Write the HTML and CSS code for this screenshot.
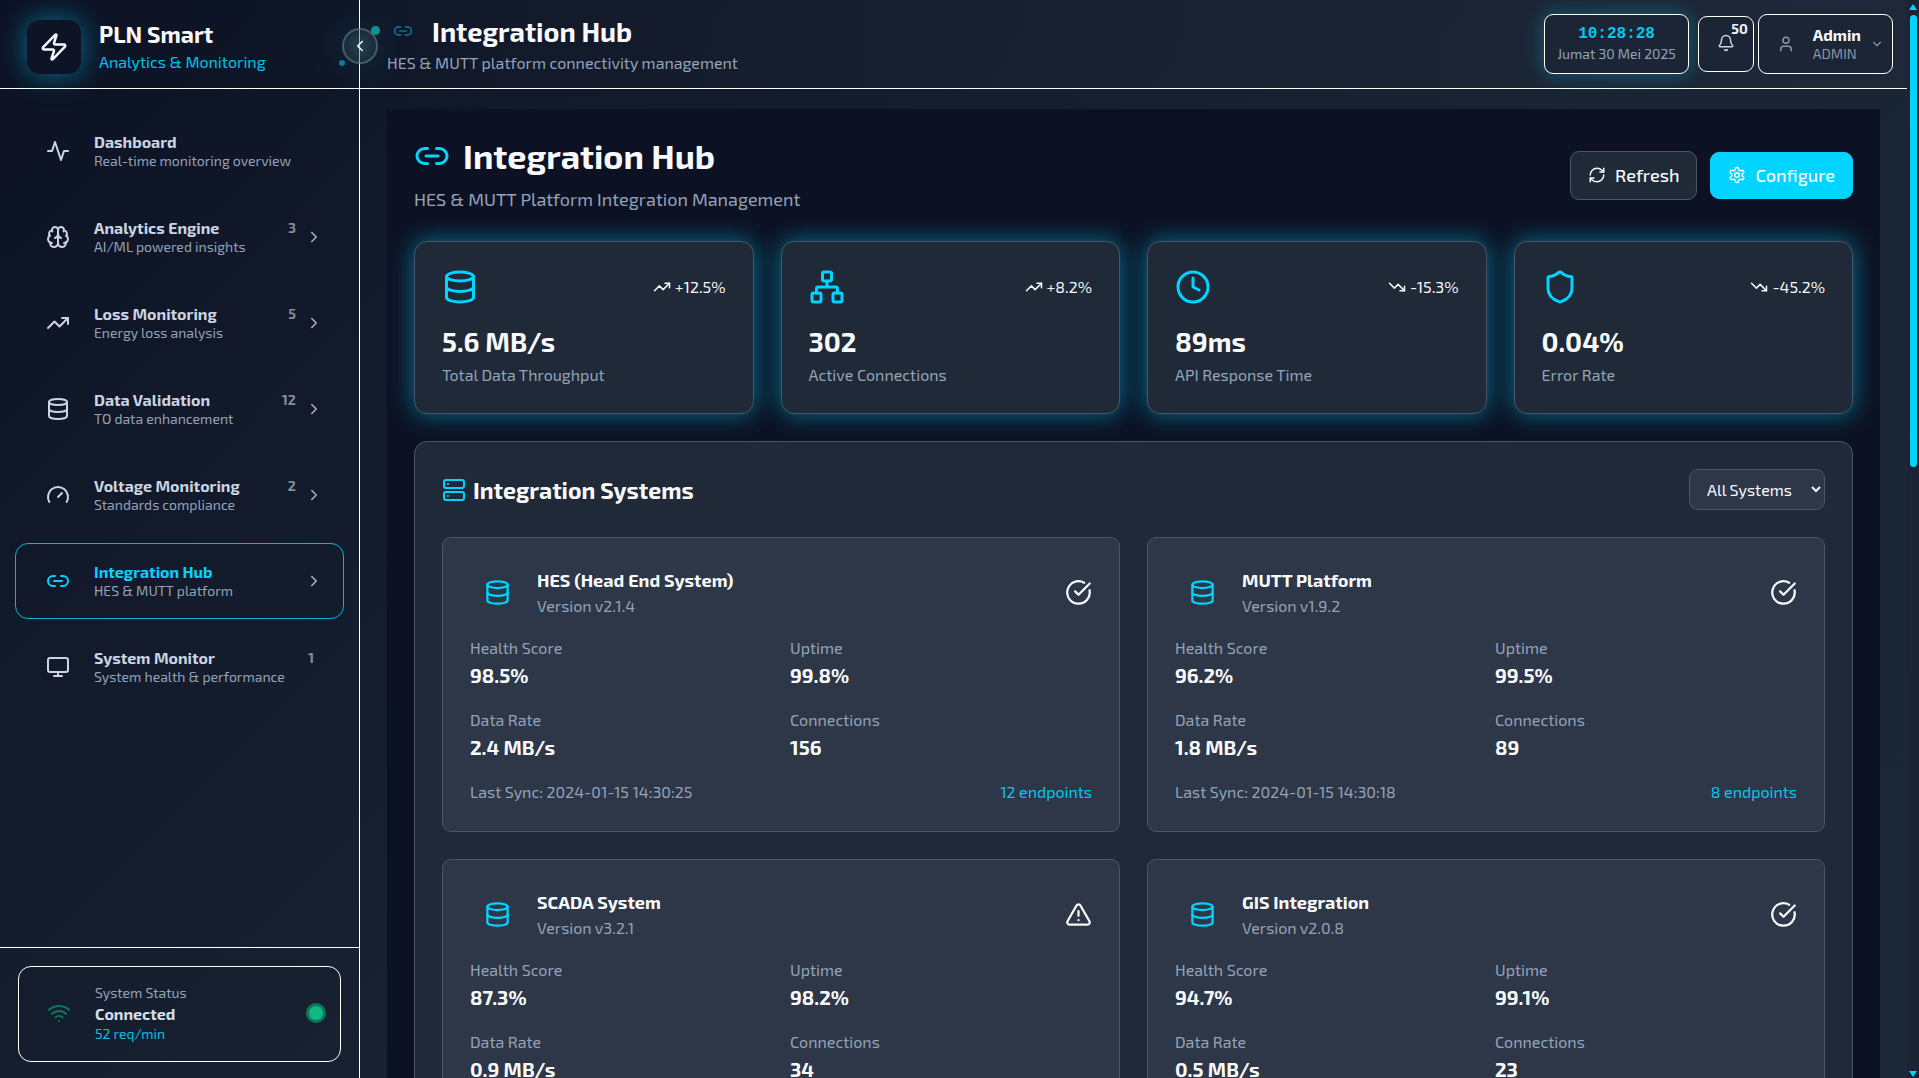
FILE: index.html
```html
<!DOCTYPE html>
<html lang="en">
<head>
<meta charset="utf-8">
<meta name="viewport" content="width=device-width, initial-scale=1">
<title>PLN Smart - Integration Hub</title>
<link rel="stylesheet" href="styles.css">
</head>
<body>
<svg class="sprite" aria-hidden="true">
  <symbol id="i-zap" viewBox="0 0 24 24"><path d="M4 14a1 1 0 0 1-.78-1.63l9.9-10.2a.5.5 0 0 1 .86.46l-1.92 6.02A1 1 0 0 0 13 10h7a1 1 0 0 1 .78 1.63l-9.9 10.2a.5.5 0 0 1-.86-.46l1.92-6.02A1 1 0 0 0 11 14z"/></symbol>
  <symbol id="i-activity" viewBox="0 0 24 24"><path d="M22 12h-4l-3 9L9 3l-3 9H2"/></symbol>
  <symbol id="i-brain" viewBox="0 0 24 24"><path d="M12 5a3 3 0 1 0-5.997.125 4 4 0 0 0-2.526 5.77 4 4 0 0 0 .556 6.588A4 4 0 1 0 12 18Z"/><path d="M12 5a3 3 0 1 1 5.997.125 4 4 0 0 1 2.526 5.77 4 4 0 0 1-.556 6.588A4 4 0 1 1 12 18Z"/><path d="M15 13a4.5 4.5 0 0 1-3-4 4.5 4.5 0 0 1-3 4"/><path d="M17.599 6.5a3 3 0 0 0 .399-1.375M6.003 5.125A3 3 0 0 0 6.401 6.5M3.477 10.896a4 4 0 0 1 .585-.396M19.938 10.5a4 4 0 0 1 .585.396M6 18a4 4 0 0 1-1.967-.516M19.967 17.484A4 4 0 0 1 18 18"/></symbol>
  <symbol id="i-up" viewBox="0 0 24 24"><path d="M22 7 13.5 15.5 8.5 10.5 2 17"/><path d="M16 7h6v6"/></symbol>
  <symbol id="i-down" viewBox="0 0 24 24"><path d="M22 17 13.5 8.5 8.5 13.5 2 7"/><path d="M16 17h6v-6"/></symbol>
  <symbol id="i-db" viewBox="0 0 24 24"><ellipse cx="12" cy="5" rx="9" ry="3"/><path d="M3 5v14a9 3 0 0 0 18 0V5"/><path d="M3 12a9 3 0 0 0 18 0"/></symbol>
  <symbol id="i-gauge" viewBox="0 0 24 24"><path d="m12 14 4-4"/><path d="M3.34 19a10 10 0 1 1 17.32 0"/></symbol>
  <symbol id="i-link" viewBox="0 0 24 24"><path d="M9 17H7A5 5 0 0 1 7 7h2"/><path d="M15 7h2a5 5 0 1 1 0 10h-2"/><path d="M8 12h8"/></symbol>
  <symbol id="i-monitor" viewBox="0 0 24 24"><rect x="2" y="3" width="20" height="14" rx="2"/><path d="M8 21h8M12 17v4"/></symbol>
  <symbol id="i-right" viewBox="0 0 24 24"><path d="m9 18 6-6-6-6"/></symbol>
  <symbol id="i-left" viewBox="0 0 24 24"><path d="m15 18-6-6 6-6"/></symbol>
  <symbol id="i-chev" viewBox="0 0 24 24"><path d="m6 9 6 6 6-6"/></symbol>
  <symbol id="i-wifi" viewBox="0 0 24 24"><path d="M12 20h.01M2 8.82a15 15 0 0 1 20 0M5 12.859a10 10 0 0 1 14 0M8.5 16.429a5 5 0 0 1 7 0"/></symbol>
  <symbol id="i-bell" viewBox="0 0 24 24"><path d="M10.268 21a2 2 0 0 0 3.464 0"/><path d="M3.262 15.326A1 1 0 0 0 4 17h16a1 1 0 0 0 .74-1.673C19.41 13.956 18 12.499 18 8A6 6 0 0 0 6 8c0 4.499-1.411 5.956-2.738 7.326"/></symbol>
  <symbol id="i-user" viewBox="0 0 24 24"><path d="M19 21v-2a4 4 0 0 0-4-4H9a4 4 0 0 0-4 4v2"/><circle cx="12" cy="7" r="4"/></symbol>
  <symbol id="i-refresh" viewBox="0 0 24 24"><path d="M3 12a9 9 0 0 1 9-9 9.75 9.75 0 0 1 6.74 2.74L21 8"/><path d="M21 3v5h-5"/><path d="M21 12a9 9 0 0 1-9 9 9.75 9.75 0 0 1-6.74-2.74L3 16"/><path d="M8 16H3v5"/></symbol>
  <symbol id="i-gear" viewBox="0 0 24 24"><path d="M12.22 2h-.44a2 2 0 0 0-2 2v.18a2 2 0 0 1-1 1.73l-.43.25a2 2 0 0 1-2 0l-.15-.08a2 2 0 0 0-2.73.73l-.22.38a2 2 0 0 0 .73 2.73l.15.1a2 2 0 0 1 1 1.72v.51a2 2 0 0 1-1 1.74l-.15.09a2 2 0 0 0-.73 2.73l.22.38a2 2 0 0 0 2.73.73l.15-.08a2 2 0 0 1 2 0l.43.25a2 2 0 0 1 1 1.73V20a2 2 0 0 0 2 2h.44a2 2 0 0 0 2-2v-.18a2 2 0 0 1 1-1.73l.43-.25a2 2 0 0 1 2 0l.15.08a2 2 0 0 0 2.73-.73l.22-.39a2 2 0 0 0-.73-2.73l-.15-.08a2 2 0 0 1-1-1.74v-.5a2 2 0 0 1 1-1.74l.15-.09a2 2 0 0 0 .73-2.73l-.22-.38a2 2 0 0 0-2.73-.73l-.15.08a2 2 0 0 1-2 0l-.43-.25a2 2 0 0 1-1-1.73V4a2 2 0 0 0-2-2z"/><circle cx="12" cy="12" r="3"/></symbol>
  <symbol id="i-network" viewBox="0 0 24 24"><rect x="16" y="16" width="6" height="6" rx="1"/><rect x="2" y="16" width="6" height="6" rx="1"/><rect x="9" y="2" width="6" height="6" rx="1"/><path d="M5 16v-3a1 1 0 0 1 1-1h12a1 1 0 0 1 1 1v3M12 12V8"/></symbol>
  <symbol id="i-clock" viewBox="0 0 24 24"><circle cx="12" cy="12" r="10"/><path d="M12 6v6l4 2"/></symbol>
  <symbol id="i-shield" viewBox="0 0 24 24"><path d="M20 13c0 5-3.5 7.5-7.66 8.95a1 1 0 0 1-.67-.01C7.5 20.5 4 18 4 13V6a1 1 0 0 1 1-1c2 0 4.5-1.2 6.24-2.72a1.17 1.17 0 0 1 1.52 0C14.51 3.81 17 5 19 5a1 1 0 0 1 1 1z"/></symbol>
  <symbol id="i-server" viewBox="0 0 24 24"><rect x="2" y="2" width="20" height="8" rx="2"/><rect x="2" y="14" width="20" height="8" rx="2"/><path d="M6 6h.01M6 18h.01"/></symbol>
  <symbol id="i-check" viewBox="0 0 24 24"><path d="M21.801 10A10 10 0 1 1 17 3.335"/><path d="m9 11 3 3L22 4"/></symbol>
  <symbol id="i-warn" viewBox="0 0 24 24"><path d="m21.73 18-8-14a2 2 0 0 0-3.48 0l-8 14A2 2 0 0 0 4 21h16a2 2 0 0 0 1.73-3"/><path d="M12 9v4M12 17h.01"/></symbol>
</svg>

<div class="app">
  <aside class="sidebar">
    <div class="brand">
      <span class="logo"><svg class="icon s30"><use href="#i-zap"/></svg></span>
      <div>
        <p class="brand-name">PLN Smart</p>
        <p class="brand-sub">Analytics &amp; Monitoring</p>
      </div>
      <i class="particle small"></i>
      <i class="particle large"></i>
      <button class="collapse" aria-label="Collapse sidebar"><svg class="icon s18"><use href="#i-left"/></svg></button>
    </div>

    <nav class="nav">
      <a class="nav-item" href="#dashboard"><svg class="icon s24"><use href="#i-activity"/></svg><span class="nav-text"><b>Dashboard</b><small>Real-time monitoring overview</small></span></a>
      <a class="nav-item" href="#analytics"><svg class="icon s24"><use href="#i-brain"/></svg><span class="nav-text"><b>Analytics Engine</b><small>AI/ML powered insights</small></span><span class="badge">3</span><svg class="icon s18 chev"><use href="#i-right"/></svg></a>
      <a class="nav-item" href="#loss"><svg class="icon s24"><use href="#i-up"/></svg><span class="nav-text"><b>Loss Monitoring</b><small>Energy loss analysis</small></span><span class="badge">5</span><svg class="icon s18 chev"><use href="#i-right"/></svg></a>
      <a class="nav-item" href="#validation"><svg class="icon s24"><use href="#i-db"/></svg><span class="nav-text"><b>Data Validation</b><small>TO data enhancement</small></span><span class="badge">12</span><svg class="icon s18 chev"><use href="#i-right"/></svg></a>
      <a class="nav-item" href="#voltage"><svg class="icon s24"><use href="#i-gauge"/></svg><span class="nav-text"><b>Voltage Monitoring</b><small>Standards compliance</small></span><span class="badge">2</span><svg class="icon s18 chev"><use href="#i-right"/></svg></a>
      <a class="nav-item active" href="#integration" aria-current="page"><svg class="icon s24"><use href="#i-link"/></svg><span class="nav-text"><b>Integration Hub</b><small>HES &amp; MUTT platform</small></span><svg class="icon s18 chev"><use href="#i-right"/></svg></a>
      <a class="nav-item" href="#system"><svg class="icon s24"><use href="#i-monitor"/></svg><span class="nav-text"><b>System Monitor</b><small>System health &amp; performance</small></span><span class="badge">1</span></a>
    </nav>

    <div class="side-foot">
      <div class="status">
        <svg class="icon s24 wifi"><use href="#i-wifi"/></svg>
        <div class="status-text">
          <p class="status-label">System Status</p>
          <p class="status-value">Connected</p>
          <p class="status-rate">52 req/min</p>
        </div>
        <i class="status-dot"></i>
      </div>
    </div>
  </aside>

  <div class="main">
    <header class="topbar">
      <div>
        <div class="top-title"><svg class="icon s20"><use href="#i-link"/></svg><h2>Integration Hub</h2></div>
        <p class="top-sub">HES &amp; MUTT platform connectivity management</p>
      </div>
      <div class="top-tools">
        <div class="clock"><time class="clock-time">10:28:28</time><span class="clock-date">Jumat 30 Mei 2025</span></div>
        <button class="bell" aria-label="Notifications"><svg class="icon s18"><use href="#i-bell"/></svg><span class="bell-count">50</span></button>
        <button class="user"><svg class="icon s18"><use href="#i-user"/></svg><span class="user-text"><b>Admin</b><span>ADMIN</span></span><svg class="icon s14"><use href="#i-chev"/></svg></button>
      </div>
    </header>

    <main class="content">
      <div class="panel">
        <div class="page-head">
          <div>
            <div class="page-title"><svg class="icon s36"><use href="#i-link"/></svg><h1>Integration Hub</h1></div>
            <p class="page-sub">HES &amp; MUTT Platform Integration Management</p>
          </div>
          <div class="actions">
            <button class="btn"><svg class="icon s18"><use href="#i-refresh"/></svg>Refresh</button>
            <button class="btn primary"><svg class="icon s18"><use href="#i-gear"/></svg>Configure</button>
          </div>
        </div>

        <div class="stats">
          <section class="stat"><div class="stat-top"><svg class="icon s36"><use href="#i-db"/></svg><span class="trend"><svg class="icon s18"><use href="#i-up"/></svg>+12.5%</span></div><p class="stat-value">5.6 MB/s</p><p class="stat-label">Total Data Throughput</p></section>
          <section class="stat"><div class="stat-top"><svg class="icon s36"><use href="#i-network"/></svg><span class="trend"><svg class="icon s18"><use href="#i-up"/></svg>+8.2%</span></div><p class="stat-value">302</p><p class="stat-label">Active Connections</p></section>
          <section class="stat"><div class="stat-top"><svg class="icon s36"><use href="#i-clock"/></svg><span class="trend"><svg class="icon s18"><use href="#i-down"/></svg>-15.3%</span></div><p class="stat-value">89ms</p><p class="stat-label">API Response Time</p></section>
          <section class="stat"><div class="stat-top"><svg class="icon s36"><use href="#i-shield"/></svg><span class="trend"><svg class="icon s18"><use href="#i-down"/></svg>-45.2%</span></div><p class="stat-value">0.04%</p><p class="stat-label">Error Rate</p></section>
        </div>

        <section class="systems">
          <div class="systems-head">
            <div class="systems-title"><svg class="icon s24"><use href="#i-server"/></svg><h2>Integration Systems</h2></div>
            <select class="filter" aria-label="Filter systems"><option>All Systems</option><option>Connected</option><option>Warning</option></select>
          </div>
          <div class="system-grid">
            <article class="system">
              <div class="system-head"><span class="system-icon"><svg class="icon s27"><use href="#i-db"/></svg></span><div class="system-name"><h3>HES (Head End System)</h3><p>Version v2.1.4</p></div><svg class="icon s27"><use href="#i-check"/></svg></div>
              <dl class="metrics"><div><dt>Health Score</dt><dd>98.5%</dd></div><div><dt>Uptime</dt><dd>99.8%</dd></div><div><dt>Data Rate</dt><dd>2.4 MB/s</dd></div><div><dt>Connections</dt><dd>156</dd></div></dl>
              <div class="system-foot"><span>Last Sync: 2024-01-15 14:30:25</span><span class="endpoints">12 endpoints</span></div>
            </article>
            <article class="system">
              <div class="system-head"><span class="system-icon"><svg class="icon s27"><use href="#i-db"/></svg></span><div class="system-name"><h3>MUTT Platform</h3><p>Version v1.9.2</p></div><svg class="icon s27"><use href="#i-check"/></svg></div>
              <dl class="metrics"><div><dt>Health Score</dt><dd>96.2%</dd></div><div><dt>Uptime</dt><dd>99.5%</dd></div><div><dt>Data Rate</dt><dd>1.8 MB/s</dd></div><div><dt>Connections</dt><dd>89</dd></div></dl>
              <div class="system-foot"><span>Last Sync: 2024-01-15 14:30:18</span><span class="endpoints">8 endpoints</span></div>
            </article>
            <article class="system">
              <div class="system-head"><span class="system-icon"><svg class="icon s27"><use href="#i-db"/></svg></span><div class="system-name"><h3>SCADA System</h3><p>Version v3.2.1</p></div><svg class="icon s27"><use href="#i-warn"/></svg></div>
              <dl class="metrics"><div><dt>Health Score</dt><dd>87.3%</dd></div><div><dt>Uptime</dt><dd>98.2%</dd></div><div><dt>Data Rate</dt><dd>0.9 MB/s</dd></div><div><dt>Connections</dt><dd>34</dd></div></dl>
            </article>
            <article class="system">
              <div class="system-head"><span class="system-icon"><svg class="icon s27"><use href="#i-db"/></svg></span><div class="system-name"><h3>GIS Integration</h3><p>Version v2.0.8</p></div><svg class="icon s27"><use href="#i-check"/></svg></div>
              <dl class="metrics"><div><dt>Health Score</dt><dd>94.7%</dd></div><div><dt>Uptime</dt><dd>99.1%</dd></div><div><dt>Data Rate</dt><dd>0.5 MB/s</dd></div><div><dt>Connections</dt><dd>23</dd></div></dl>
            </article>
          </div>
        </section>
      </div>
    </main>
  </div>

  <div class="scrollbar" aria-hidden="true"><i class="arrow-up"></i><div class="track"><i class="thumb"></i></div><i class="arrow-down"></i></div>
</div>
</body>
</html>
```
FILE: styles.css
```css
:root {
  --cyan: #00d4ff;
  --text: #f8fafc;
  --soft: #cbd5e1;
  --muted: #94a3b8;
  --card: #1f2937;
  --raised: #2d3748;
  --line: #4a5568;
}

* { box-sizing: border-box; }

body, h1, h2, h3, p, dl, dd { margin: 0; }

body {
  height: 100vh;
  overflow: hidden;
  background: linear-gradient(135deg, #0c1224 0%, #121a2b 25%, #1a2534 60%, #1c2838 100%);
  color: var(--text);
  font-family: "Exo 2", Roboto, "Noto Sans", sans-serif;
  font-size: 16px;
  line-height: 24px;
}

button, select { font: inherit; color: inherit; cursor: pointer; }
a { color: inherit; text-decoration: none; }

.sprite { position: absolute; width: 0; height: 0; }

.icon {
  flex: none;
  fill: none;
  stroke: currentColor;
  stroke-width: 2;
  stroke-linecap: round;
  stroke-linejoin: round;
}
.s14 { width: 14px; height: 14px; }
.s18 { width: 18px; height: 18px; }
.s20 { width: 20px; height: 20px; }
.s24 { width: 24px; height: 24px; }
.s27 { width: 27px; height: 27px; }
.s30 { width: 30px; height: 30px; }
.s36 { width: 36px; height: 36px; }

.app {
  display: grid;
  grid-template-columns: 360px minmax(0, 1fr) 12px;
  height: 100vh;
}

/* Sidebar */
.sidebar {
  display: flex;
  flex-direction: column;
  min-height: 0;
  border-right: 1px solid #fff;
}
.brand {
  position: relative;
  display: flex;
  align-items: center;
  gap: 18px;
  height: 89px;
  padding: 5px 27px 0;
  border-bottom: 1px solid #fff;
}
.logo {
  display: grid;
  place-items: center;
  width: 54px;
  height: 54px;
  border-radius: 13px;
  background: #0d1425;
  box-shadow: 0 0 28px rgba(0, 212, 255, .5);
}
.brand-name { font-size: 23px; font-weight: 700; line-height: 30px; }
.brand-sub { color: var(--cyan); font-size: 16px; line-height: 26px; opacity: .9; }
.collapse {
  position: absolute;
  top: 28px;
  right: -19px;
  z-index: 1;
  display: grid;
  place-items: center;
  width: 36px;
  height: 36px;
  padding: 0;
  border: 2px solid rgba(120, 135, 150, .5);
  border-radius: 50%;
  background: radial-gradient(rgba(60, 110, 120, .5), rgba(31, 55, 72, .35));
  box-shadow: 0 0 40px rgba(0, 160, 170, .2);
}
.particle { position: absolute; z-index: 1; border-radius: 50%; }
.particle.large { top: 26px; right: -21px; width: 9px; height: 9px; background: #0a9494; }
.particle.small { top: 60px; right: 14px; width: 6px; height: 6px; background: #08789a; }

.nav {
  display: flex;
  flex: 1;
  flex-direction: column;
  gap: 10px;
  min-height: 0;
  padding: 24px 15px 0;
}
.nav-item {
  display: flex;
  flex: none;
  align-items: center;
  height: 76px;
  padding: 0 20px 0 30px;
  border: 1px solid transparent;
  border-radius: 13px;
  color: var(--soft);
}
.nav-item.active { border-color: #0bb3d8; }
.nav-text { display: flex; flex: 1; flex-direction: column; margin-left: 24px; }
.nav-text b { font-size: 16px; line-height: 20px; }
.nav-text small { color: var(--muted); font-size: 14px; line-height: 18px; }
.active b, .active .icon:first-child { color: var(--cyan); }
.badge {
  align-self: flex-start;
  margin-top: 18px;
  color: #868b94;
  font-size: 14px;
  font-weight: 700;
  line-height: 20px;
}
.nav-item .chev { margin-left: 9px; color: #a9b4c4; }
.badge:last-child { margin-right: 9px; }

.side-foot { padding: 18px 18px 16px; border-top: 1px solid #fff; }
.status {
  display: flex;
  align-items: center;
  padding: 16px 14px 18px 28px;
  border: 1px solid #fff;
  border-radius: 13px;
}
.wifi { color: #10755a; }
.status-text { flex: 1; margin-left: 24px; }
.status-label { color: var(--muted); font-size: 14px; line-height: 20px; }
.status-value { color: #d6deea; font-weight: 700; line-height: 22px; }
.status-rate { color: #06bfe5; font-size: 14px; line-height: 18px; }
.status-dot { width: 20px; height: 20px; border: 3px solid #0f765a; border-radius: 50%; background: #10b981; }

/* Main column */
.main { display: flex; flex-direction: column; min-width: 0; min-height: 0; }
.topbar {
  display: flex;
  flex: none;
  align-items: center;
  justify-content: space-between;
  height: 89px;
  padding: 0 14px 0 27px;
  border-bottom: 1px solid #fff;
  background: linear-gradient(90deg, rgba(16, 24, 40, .5), #1e2838);
}
.top-title { display: flex; align-items: center; gap: 19px; padding-left: 6px; }
.top-title .icon { color: #08718f; }
.top-title h2 { font-size: 27px; line-height: 38px; }
.top-sub { color: var(--muted); font-size: 16px; line-height: 26px; }
.top-tools { display: flex; align-items: center; }
.clock, .bell, .user { border: 1px solid #fff; border-radius: 9px; background: #1b2535; }
.clock {
  display: flex;
  flex-direction: column;
  justify-content: center;
  height: 60px;
  padding: 0 12px;
  text-align: center;
  box-shadow: 0 0 20px rgba(0, 212, 255, .35);
}
.clock-time { color: #06c8f0; font-family: "Liberation Mono", monospace; font-size: 16px; font-weight: 700; line-height: 20px; }
.clock-date { color: var(--muted); font-size: 14px; line-height: 20px; }
.bell { position: relative; width: 56px; height: 56px; margin: 0 4px 0 9px; padding: 4px 0 0; color: var(--soft); }
.bell-count { position: absolute; top: 3px; right: 5px; color: #eef2f7; font-size: 14px; font-weight: 700; line-height: 18px; }
.user { display: flex; align-items: center; height: 60px; padding: 0 8px 0 18px; color: #8a96a8; }
.user-text { display: flex; flex-direction: column; margin: 0 9px 0 18px; text-align: left; font-size: 14px; line-height: 18px; }
.user-text b { color: var(--text); font-size: 16px; line-height: 20px; }

.content { flex: 1; min-height: 0; overflow: hidden; padding: 20px 27px 0; }
.panel { padding: 27px; background: #0c1223; }
.page-head { display: flex; align-items: center; justify-content: space-between; margin-bottom: 27px; }
.page-title { display: flex; align-items: center; gap: 13px; margin-bottom: 9px; }
.page-title .icon, .stat-top > .icon, .systems-title .icon, .system-icon { color: var(--cyan); }
.page-title h1 { font-size: 34px; line-height: 40px; }
.page-sub { color: var(--muted); font-size: 18px; line-height: 29px; }
.actions { display: flex; align-items: center; gap: 13px; }
.btn {
  display: flex;
  align-items: center;
  gap: 9px;
  height: 49px;
  padding: 0 17px;
  border: 1px solid var(--line);
  border-radius: 9px;
  background: var(--card);
  font-size: 18px;
  font-weight: 500;
}
.btn.primary { height: 47px; border-color: var(--cyan); background: var(--cyan); }

.stats { display: grid; grid-template-columns: repeat(4, minmax(0, 1fr)); gap: 27px; margin-bottom: 27px; }
.stat {
  padding: 27px;
  border: 1px solid var(--line);
  border-radius: 13px;
  background: var(--card);
  box-shadow: 0 0 24px rgba(0, 212, 255, .5);
}
.stat-top { display: flex; align-items: center; justify-content: space-between; margin-bottom: 18px; }
.trend { display: flex; align-items: center; gap: 4px; font-size: 16px; }
.stat-value { margin-bottom: 5px; font-size: 27px; font-weight: 700; line-height: 36px; }
.stat-label { color: var(--muted); line-height: 22px; }

.systems { padding: 27px; border: 1px solid var(--line); border-radius: 13px; background: var(--card); }
.systems-head, .systems-title, .system-head, .system-foot { display: flex; align-items: center; }
.systems-head { justify-content: space-between; margin-bottom: 27px; }
.systems-title { gap: 7px; }
.systems-title h2 { font-size: 23px; line-height: 30px; }
.filter {
  width: 136px;
  height: 41px;
  padding: 0 0 0 13px;
  border: 1px solid var(--line);
  border-radius: 9px;
  background: var(--raised);
}
.system-grid { display: grid; grid-template-columns: repeat(2, minmax(0, 1fr)); gap: 27px; }
.system { padding: 27px; border: 1px solid var(--line); border-radius: 9px; background: var(--raised); }
.system-icon { display: grid; place-items: center; width: 54px; height: 54px; }
.system-name { flex: 1; margin-left: 13px; color: var(--muted); }
.system-name h3 { color: var(--text); font-size: 18px; line-height: 28px; }
.metrics { display: grid; grid-template-columns: repeat(2, minmax(0, 1fr)); gap: 18px; margin: 17px 0 18px; }
.metrics dt { color: var(--muted); }
.metrics dd { font-size: 20px; font-weight: 700; line-height: 30px; }
.system-foot { justify-content: space-between; color: var(--muted); }
.endpoints { color: #06c4ec; }

/* Scroll rail */
.scrollbar { display: flex; flex-direction: column; align-items: center; gap: 5px; padding: 4px 0 1px; background: #1a2434; }
.track { flex: 1; width: 7px; }
.thumb { display: block; height: 43%; border-radius: 4px; background: var(--cyan); }
.arrow-up, .arrow-down { border: 4px solid transparent; }
.arrow-up { border-top: 0; border-bottom: 6px solid var(--cyan); }
.arrow-down { border-bottom: 0; border-top: 6px solid var(--cyan); }
```
